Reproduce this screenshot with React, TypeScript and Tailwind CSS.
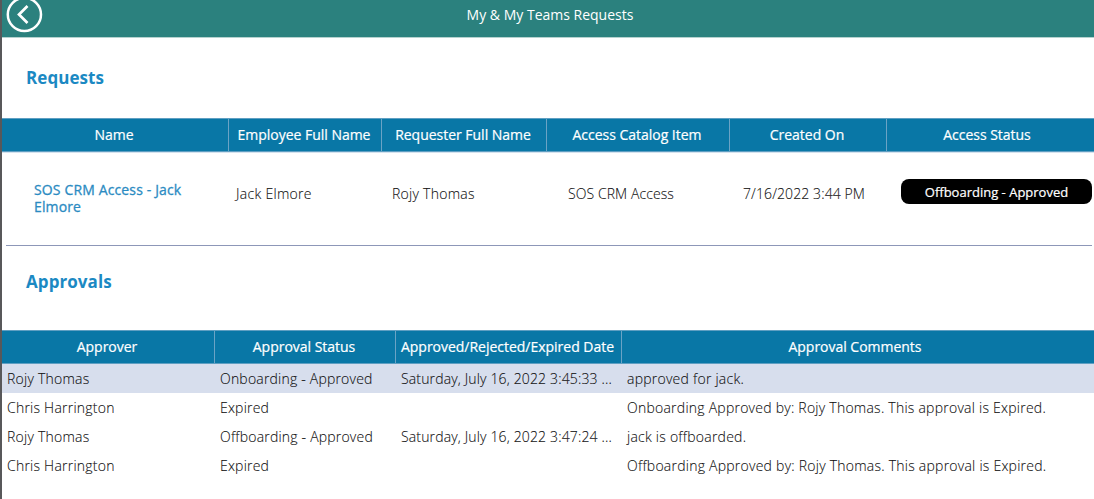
import { ReactNode } from "react";

function HeaderCell({ className, children }: { className: string; children: ReactNode }) {
  return (
    <div className={`flex shrink-0 items-center justify-center whitespace-nowrap border-[#6aa3c5] pr-0.5 pb-px text-sm font-medium tracking-[-0.02px] text-white [-webkit-text-stroke:0.2px_white] ${className}`}>
      {children}
    </div>
  );
}

const approvals = [
  { approver: "Rojy Thomas", status: "Onboarding - Approved", date: "Saturday, July 16, 2022 3:45:33 ...", comment: "approved for jack.", selected: true },
  { approver: "Chris Harrington", status: "Expired", date: "", comment: "Onboarding Approved by: Rojy Thomas. This approval is Expired.", selected: false },
  { approver: "Rojy Thomas", status: "Offboarding - Approved", date: "Saturday, July 16, 2022 3:47:24 ...", comment: "jack is offboarded.", selected: false },
  { approver: "Chris Harrington", status: "Expired", date: "", comment: "Offboarding Approved by: Rojy Thomas. This approval is Expired.", selected: false },
];

export default function App() {
  return (
    <div className="flex h-[499px] w-[1094px] flex-col overflow-hidden border-l-2 border-[#58585a] bg-white font-['Open_Sans',sans-serif] text-[#111111]">
      <header className="grid h-[38px] shrink-0 grid-cols-[44px_1fr_40px] border-b border-[#b5d2cf] bg-[#2b817e]">
        <button aria-label="Back" className="h-[37px] w-[44px]">
          <svg width="44" height="37" viewBox="0 0 44 37" fill="none" stroke="white">
            <circle cx="22.4" cy="14.5" r="16.6" strokeWidth="2.5" />
            <path d="M25.5 6 L17 14.5 L25.5 23" strokeWidth="2.7" />
          </svg>
        </button>
        <h1 className="pt-[5px] text-center text-sm leading-5 text-white">My &amp; My Teams Requests</h1>
      </header>

      <h2 className="mt-[28px] pl-6 text-[17px] font-bold leading-6 tracking-[0.07px] text-[#1b89c3]">Requests</h2>
      <div className="mt-[28px] flex h-[34px] shrink-0 border-y border-[#5f9fc2] bg-[#0977a6]">
        <HeaderCell className="w-[227px] border-r">Name</HeaderCell>
        <HeaderCell className="w-[153px] border-r">Employee Full Name</HeaderCell>
        <HeaderCell className="w-[165px] border-r">Requester Full Name</HeaderCell>
        <HeaderCell className="w-[183px] border-r">Access Catalog Item</HeaderCell>
        <HeaderCell className="w-[157px] border-r">Created On</HeaderCell>
        <HeaderCell className="w-[202px]">Access Status</HeaderCell>
      </div>
      <div className="h-px shrink-0 bg-[#d5e2ee]" />
      <div className="ml-1 mr-0.5 flex h-[93px] shrink-0 items-start border-b border-[#8d97b8] text-sm font-light leading-5 [-webkit-text-stroke:0.1px_currentColor]">
        <a className="w-[202px] pl-7 pr-4 pt-[28px] font-normal leading-[17px] tracking-[0.14px] text-[#2b8bc2] [-webkit-text-stroke:0.3px_currentColor]">SOS CRM Access - Jack Elmore</a>
        <span className="ml-[28px] w-[156px] pt-[31px] tracking-[0.3px]">Jack Elmore</span>
        <span className="w-[176px] pt-[31px] tracking-[0.27px]">Rojy Thomas</span>
        <span className="w-[175px] pt-[31px] tracking-[0.08px]">SOS CRM Access</span>
        <span className="w-[158px] pt-[31px] tracking-[0.1px]">7/16/2022 3:44 PM</span>
        <span className="mt-[26px] flex h-[25px] w-[191px] items-center justify-center rounded-lg bg-black text-[13px] font-medium text-white [-webkit-text-stroke:0.2px_white]">Offboarding - Approved</span>
      </div>

      <h2 className="mt-[24px] pl-6 text-[17px] font-bold leading-6 tracking-[0.07px] text-[#1b89c3]">Approvals</h2>
      <div className="mt-[36px] flex h-[34px] shrink-0 border-y border-[#5f9fc2] bg-[#0977a6]">
        <HeaderCell className="w-[213px] border-r">Approver</HeaderCell>
        <HeaderCell className="w-[181px] border-r">Approval Status</HeaderCell>
        <HeaderCell className="w-[226px] border-r">Approved/Rejected/Expired Date</HeaderCell>
        <HeaderCell className="w-[468px]">Approval Comments</HeaderCell>
      </div>
      {approvals.map((row, i) => (
        <div
          key={i}
          className={`grid h-[29px] shrink-0 grid-cols-[213px_181px_226px_1fr] items-center whitespace-nowrap pl-[5px] text-sm font-light leading-5 [-webkit-text-stroke:0.1px_currentColor] ${row.selected ? "bg-[#d7deed]" : "bg-white"}`}
        >
          <span className="tracking-[0.23px]">{row.approver}</span>
          <span className="tracking-[0.2px]">{row.status}</span>
          <span className="tracking-[0.15px]">{row.date}</span>
          <span className="tracking-[0.24px]">{row.comment}</span>
        </div>
      ))}
    </div>
  );
}
